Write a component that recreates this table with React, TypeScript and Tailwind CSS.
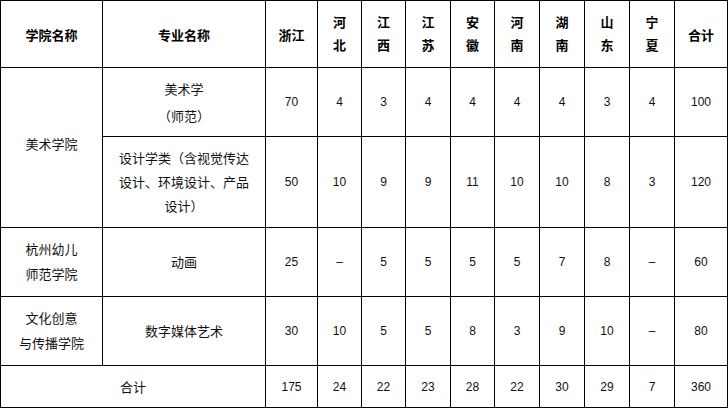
import React from "react";

const cjk = { fontFamily: '"Noto Sans CJK SC", "Liberation Sans", sans-serif' };
const num = { fontFamily: '"Liberation Sans", "Noto Sans CJK SC", sans-serif' };

function H({ children, className = "" }: { children: React.ReactNode; className?: string }) {
  return (
    <div
      className={`bg-white flex items-center justify-center text-center font-bold text-[13px] leading-[23px] text-black ${className}`}
      style={cjk}
    >
      <div>{children}</div>
    </div>
  );
}

function T({ children, className = "" }: { children: React.ReactNode; className?: string }) {
  return (
    <div
      className={`bg-white flex items-center justify-center text-center text-[13px] leading-[24px] text-[#111]`}
      style={cjk}
    >
      <div className={className}>{children}</div>
    </div>
  );
}

function N({ v }: { v: string }) {
  return (
    <div className="bg-white flex items-center justify-center text-[12px] text-[#111]" style={num}>
      {v}
    </div>
  );
}

const provinces: [string, string][] = [
  ["河", "北"],
  ["江", "西"],
  ["江", "苏"],
  ["安", "徽"],
  ["河", "南"],
  ["湖", "南"],
  ["山", "东"],
  ["宁", "夏"],
];

const rows = [
  ["70", "4", "3", "4", "4", "4", "4", "3", "4", "100"],
  ["50", "10", "9", "9", "11", "10", "10", "8", "3", "120"],
  ["25", "–", "5", "5", "5", "5", "7", "8", "–", "60"],
  ["30", "10", "5", "5", "8", "3", "9", "10", "–", "80"],
];
const total = ["175", "24", "22", "23", "28", "22", "30", "29", "7", "360"];

export default function App() {
  return (
    <div className="w-[728px] h-[409px] bg-white">
      <div className="w-[728px] grid gap-px bg-black p-px grid-cols-[101px_162px_51px_43px_43px_44px_43px_44px_44px_44px_44px_52px] grid-rows-[66px_68px_90px_68px_68px_41px]">
        <H>学院名称</H>
        <H>专业名称</H>
        <H>浙江</H>
        {provinces.map(([a, b], i) => (
          <H key={i} className="pb-[2px]">
            {a}
            <br />
            {b}
          </H>
        ))}
        <H>合计</H>

        <div className="row-span-2 bg-white flex items-center justify-center pb-[8px] text-[13px] text-[#111]" style={cjk}>
          美术学院
        </div>
        <T className="leading-[27px]">
          美术学
          <br />
          （师范）
        </T>
        {rows[0].map((v, i) => (
          <N key={i} v={v} />
        ))}

        <T>
          设计学类（含视觉传达
          <br />
          设计、环境设计、产品
          <br />
          设计）
        </T>
        {rows[1].map((v, i) => (
          <N key={i} v={v} />
        ))}

        <T className="leading-[25px] pb-[3px]">
          杭州幼儿
          <br />
          师范学院
        </T>
        <T>动画</T>
        {rows[2].map((v, i) => (
          <N key={i} v={v} />
        ))}

        <T className="leading-[25px] pb-[2px]">
          文化创意
          <br />
          与传播学院
        </T>
        <T>数字媒体艺术</T>
        {rows[3].map((v, i) => (
          <N key={i} v={v} />
        ))}

        <div className="col-span-2 bg-white flex items-center justify-center text-[13px] text-[#111]" style={cjk}>
          合计
        </div>
        {total.map((v, i) => (
          <N key={i} v={v} />
        ))}
      </div>
    </div>
  );
}
